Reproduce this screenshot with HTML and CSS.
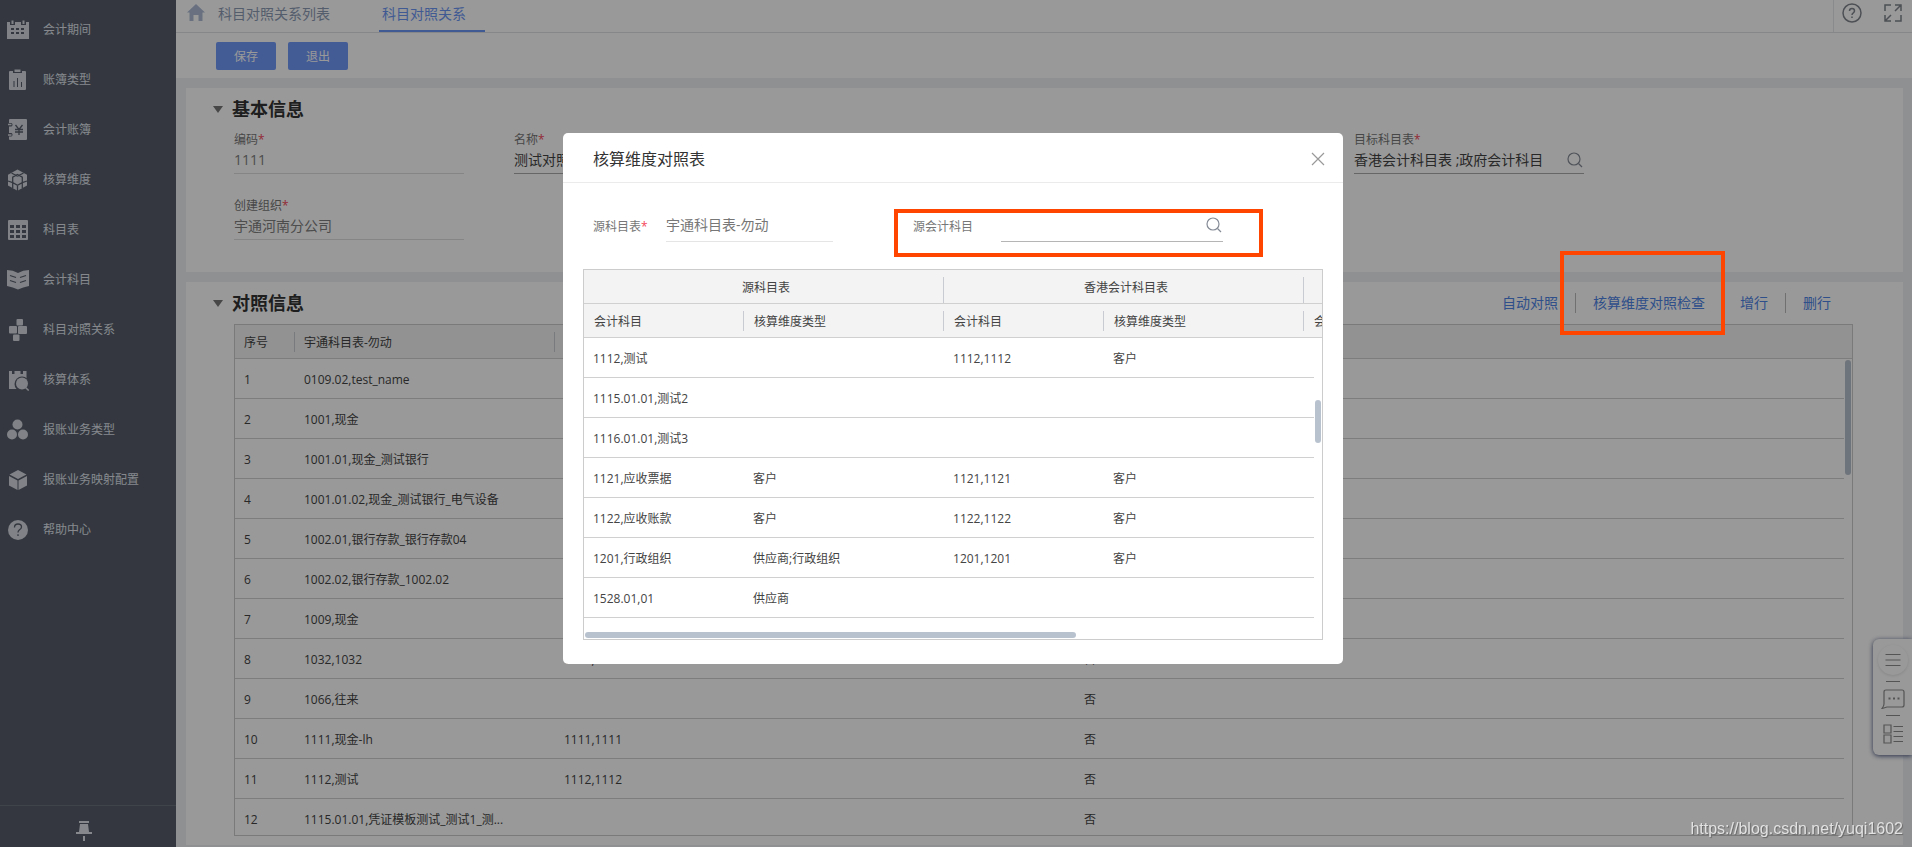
FILE: index.html
```html
<!DOCTYPE html>
<html lang="zh-CN">
<head>
<meta charset="utf-8">
<title>科目对照关系</title>
<link rel="stylesheet" href="styles.css">
</head>
<body>
<div class="app">
  <nav class="sidebar">
    <ul class="menu">
      <li><a class="menu-item" href="#"><svg class="menu-icon" viewBox="0 0 22 22"><path fill-rule="evenodd" d="M0 3h3v3h5V3h6v3h5V3h3v17H0zM4 9v2h3V9zm5 0v2h3V9zm5 0v2h3V9zM4 13v2h3v-2zm5 0v2h3v-2zm5 0v2h3v-2z"/><path d="M4.500 1.500h2v3.500h-2zM15.500 1.500h2v3.500h-2z"/></svg>会计期间</a></li>
      <li><a class="menu-item" href="#"><svg class="menu-icon" viewBox="0 0 22 22"><path fill-rule="evenodd" d="M3 2h3v2h9V2h3a1 1 0 0 1 1 1v17a1 1 0 0 1-1 1H3a1 1 0 0 1-1-1V3a1 1 0 0 1 1-1zm3.500 10v6h1v-6zm3.500-3v9h1V9zm4 4v5h1v-5z"/><path d="M7.500 0.500h6V3h-6z"/></svg>账簿类型</a></li>
      <li><a class="menu-item" href="#"><svg class="menu-icon" viewBox="0 0 22 22"><path d="M3 0h16q1 0 1 1v19q0 1-1 1H3q-1 0-1-1v-2.500h2.500a2 2 0 0 0 0-3.500H2V7.500h2.500a2 2 0 0 0 0-3.500H2V1q0-1 1-1z"/><path class="cut" d="M8.500 6l3.500 4.500L15.500 6M8 10.500h8M8 13h8M12 10.500V16"/><path class="line" d="M1 5.500h3.500M1 16h3.500"/></svg>会计账簿</a></li>
      <li><a class="menu-item" href="#"><svg class="menu-icon" viewBox="0 0 22 22"><path d="M10.500 0.500l9.500 5.300v10.600l-9.500 5.300-9.500-5.300V5.800z"/><path class="cut" d="M10.500 5.500l4.800 2.700v5.300l-4.800 2.700-4.800-2.700V8.200zM1 12l4.700 1.700M20 12l-4.700 1.700M10.500 16.200V22M4.500 4l6 3.200M16.500 4l-6 3.200M5.700 13.700V19M15.300 13.700V19"/></svg>核算维度</a></li>
      <li><a class="menu-item" href="#"><svg class="menu-icon" viewBox="0 0 22 22"><path fill-rule="evenodd" d="M2 1h18q1 0 1 1v18q0 1-1 1H2q-1 0-1-1V2q0-1 1-1zm1 5v3h4V6zm6 0v3h4V6zm6 0v3h4V6zM3 11v3h4v-3zm6 0v3h4v-3zm6 0v3h4v-3zM3 16v3h4v-3zm6 0v3h4v-3zm6 0v3h4v-3z"/></svg>科目表</a></li>
      <li><a class="menu-item" href="#"><svg class="menu-icon" viewBox="0 0 22 22"><path d="M0 1q6 0 11 3 5-3 11-3v16q-6 1-11 3.500Q6 18 0 17z"/><path class="cut" d="M3 6.500l6 2M19 6.500l-6 2M3 11.500l6 2M19 11.500l-6 2"/></svg>会计科目</a></li>
      <li><a class="menu-item" href="#"><svg class="menu-icon" viewBox="0 0 22 22"><rect x="9.500" y="0" width="6.500" height="6.500" rx="1"/><rect x="2" y="7" width="8" height="7.500" rx="1"/><rect x="11" y="7" width="9" height="8" rx="1"/><rect x="6" y="15.500" width="6.500" height="6.500" rx="1"/></svg>科目对照关系</a></li>
      <li><a class="menu-item" href="#"><svg class="menu-icon" viewBox="0 0 22 22"><path d="M2 2h3v3h2.500V2h6v3H16V2h3.500v18H2z"/><circle class="gap" cx="15" cy="15" r="7.500"/><path class="gap" d="M15 15h7v6.500h-7z"/><circle cx="15" cy="14.500" r="6"/><path class="line" d="M18.500 18.500l3.200 3"/></svg>核算体系</a></li>
      <li><a class="menu-item" href="#"><svg class="menu-icon" viewBox="0 0 22 22"><circle cx="10.500" cy="5.500" r="5"/><circle cx="5" cy="15.500" r="5"/><circle cx="16" cy="15.500" r="5"/></svg>报账业务类型</a></li>
      <li><a class="menu-item" href="#"><svg class="menu-icon" viewBox="0 0 22 22"><path d="M11 1l8.500 4.500L11 10 2.500 5.500zM2 7l8.500 4.500V21L2 16.500zM20 7l-8.500 4.500V21l8.500-4.500z"/></svg>报账业务映射配置</a></li>
      <li><a class="menu-item" href="#"><svg class="menu-icon" viewBox="0 0 22 22"><circle cx="11" cy="11" r="10"/><path class="cut" d="M7.500 8.500q0-3.500 3.500-3.500t3.500 3q0 1.500-2 2.800Q11 12 11 13.500M11 15.300v1.800"/></svg>帮助中心</a></li>
    </ul>
    <button class="pin" type="button" aria-label="固定菜单"><svg class="pin-icon" viewBox="0 0 18 20"><path d="M4 0h10v2H4zM5 3h8l1 8h3v2H1v-2h3zM8 15h2v5H8z"/></svg></button>
  </nav>

  <div class="main">
    <header class="topbar">
      <a class="home" href="#" aria-label="首页"><svg class="home-icon" viewBox="0 0 18 18"><path d="M9 0l9 8.500h-2.500V17h-4v-6h-5v6h-4V8.500H0z"/></svg></a>
      <a class="tab" href="#">科目对照关系列表</a>
      <a class="tab tab-active" href="#">科目对照关系</a>
      <div class="top-tools">
        <button class="tool" type="button" aria-label="帮助"><svg class="tool-icon" viewBox="0 0 20 20"><circle cx="10" cy="10" r="9"/><path d="M7.500 8q0-2.500 2.500-2.500T12.500 8q0 1-1.200 1.800Q10 10.600 10 12M10 13.500V15"/></svg></button>
        <button class="tool" type="button" aria-label="全屏"><svg class="tool-icon" viewBox="0 0 20 20"><path d="M2 8V2h6M12 2h6v6M12 8l6-6M18 12v6h-6M8 18H2v-6M8 12l-6 6"/></svg></button>
      </div>
    </header>
    <div class="actions">
      <button class="btn" type="button">保存</button>
      <button class="btn" type="button">退出</button>
    </div>

    <section class="card card-basic">
      <div class="card-head"><span class="arrow"></span><h2 class="card-title">基本信息</h2></div>
      <div class="fields">
        <div class="field"><label class="label" for="code">编码<i class="req">*</i></label><div class="control"><input class="input" id="code" value="1111" readonly></div></div>
        <div class="field"><label class="label" for="name">名称<i class="req">*</i></label><div class="control control-edit"><input class="input" id="name" value="测试对照关系"></div></div>
        <div class="field field-target"><label class="label" for="target">目标科目表<i class="req">*</i></label><div class="control control-edit"><input class="input" id="target" value="香港会计科目表 ;政府会计科目"><svg class="search-icon" viewBox="0 0 16 16"><circle cx="7" cy="7" r="6"/><path d="M11.500 11.500L15 15"/></svg></div></div>
        <div class="field"><label class="label" for="org">创建组织<i class="req">*</i></label><div class="control"><input class="input" id="org" value="宇通河南分公司" readonly></div></div>
      </div>
    </section>

    <section class="card card-map">
      <div class="card-head">
        <span class="arrow"></span><h2 class="card-title">对照信息</h2>
        <div class="links">
          <button class="link" type="button">自动对照</button>
          <button class="link" type="button">核算维度对照检查</button>
          <button class="link" type="button">增行</button>
          <button class="link" type="button">删行</button>
        </div>
      </div>
      <div class="grid-box">
        <table class="grid">
          <colgroup><col class="c-no"><col class="c-wide"><col class="c-wide"><col class="c-wide"><col></colgroup>
          <thead><tr><th>序号</th><th>宇通科目表-勿动</th><th></th><th></th><th class="last"></th></tr></thead>
          <tbody>
            <tr><td>1</td><td>0109.02,test_name</td><td></td><td></td><td></td></tr>
            <tr><td>2</td><td>1001,现金</td><td></td><td></td><td></td></tr>
            <tr><td>3</td><td>1001.01,现金_测试银行</td><td></td><td></td><td></td></tr>
            <tr><td>4</td><td>1001.01.02,现金_测试银行_电气设备</td><td></td><td></td><td></td></tr>
            <tr><td>5</td><td>1002.01,银行存款_银行存款04</td><td></td><td></td><td></td></tr>
            <tr><td>6</td><td>1002.02,银行存款_1002.02</td><td></td><td></td><td></td></tr>
            <tr><td>7</td><td>1009,现金</td><td></td><td></td><td></td></tr>
            <tr><td>8</td><td>1032,1032</td><td>1032,1032</td><td></td><td>否</td></tr>
            <tr><td>9</td><td>1066,往来</td><td></td><td></td><td>否</td></tr>
            <tr><td>10</td><td>1111,现金-lh</td><td>1111,1111</td><td></td><td>否</td></tr>
            <tr><td>11</td><td>1112,测试</td><td>1112,1112</td><td></td><td>否</td></tr>
            <tr><td>12</td><td>1115.01.01,凭证模板测试_测试1_测...</td><td></td><td></td><td>否</td></tr>
          </tbody>
        </table>
        <div class="track track-page"><div class="thumb"></div></div>
      </div>
    </section>
  </div>
</div>

<aside class="dock">
  <svg class="dock-icon dock-round" viewBox="0 0 30 30"><path d="M7.500 9.500h15M7.500 15h15M7.500 20.500h15"/></svg>
  <span class="dash"></span>
  <svg class="dock-icon dock-chat" viewBox="0 0 24 20"><path d="M5 1h16q2 0 2 2v13q0 2-2 2H6l-5 1.500Q3 17 3 15V3q0-2 2-2z"/><path class="dots" d="M7.500 9.500h2M12 9.500h2M16.500 9.500h2"/></svg>
  <span class="dash"></span>
  <svg class="dock-icon dock-list" viewBox="0 0 20 20"><path d="M1 1h7v8H1zM1 11h7v8H1zM10.500 2.500H20M10.500 7.500H20M10.500 12.500H20M10.500 17.500H20"/></svg>
</aside>

<div class="overlay">
  <div class="modal" role="dialog" aria-labelledby="modal-title">
    <div class="modal-head">
      <h3 class="modal-title" id="modal-title">核算维度对照表</h3>
      <button class="close" type="button" aria-label="关闭"><svg class="close-icon" viewBox="0 0 14 14"><path d="M1 1l12 12M13 1L1 13"/></svg></button>
    </div>
    <div class="modal-form">
      <label class="label label-src" for="src">源科目表<i class="req">*</i></label>
      <div class="line-control line-src"><input class="input" id="src" value="宇通科目表-勿动" readonly></div>
      <label class="label label-acc" for="acc">源会计科目</label>
      <div class="line-control line-acc"><input class="input" id="acc"><svg class="search-icon" viewBox="0 0 16 16"><circle cx="7" cy="7" r="6"/><path d="M11.500 11.500L15 15"/></svg></div>
    </div>
    <div class="grid-box modal-grid">
      <table class="grid grid-dim">
        <colgroup><col class="d-a"><col class="d-b"><col class="d-a"><col class="d-b"><col class="d-a"><col class="d-b"></colgroup>
        <thead>
          <tr><th class="group" colspan="2">源科目表</th><th class="group" colspan="2">香港会计科目表</th><th class="group" colspan="2"></th></tr>
          <tr><th>会计科目</th><th>核算维度类型</th><th>会计科目</th><th>核算维度类型</th><th>会计科目</th><th></th></tr>
        </thead>
        <tbody>
          <tr><td>1112,测试</td><td></td><td>1112,1112</td><td>客户</td><td></td><td></td></tr>
          <tr><td>1115.01.01,测试2</td><td></td><td></td><td></td><td></td><td></td></tr>
          <tr><td>1116.01.01,测试3</td><td></td><td></td><td></td><td></td><td></td></tr>
          <tr><td>1121,应收票据</td><td>客户</td><td>1121,1121</td><td>客户</td><td></td><td></td></tr>
          <tr><td>1122,应收账款</td><td>客户</td><td>1122,1122</td><td>客户</td><td></td><td></td></tr>
          <tr><td>1201,行政组织</td><td>供应商;行政组织</td><td>1201,1201</td><td>客户</td><td></td><td></td></tr>
          <tr><td>1528.01,01</td><td>供应商</td><td></td><td></td><td></td><td></td></tr>
        </tbody>
      </table>
      <div class="track track-modal"><div class="thumb"></div></div>
      <div class="hbar"></div>
    </div>
  </div>
</div>

<div class="mark mark-search"></div>
<div class="mark mark-check"></div>
<p class="watermark">https://blog.csdn.net/yuqi1602</p>
</body>
</html>
```
FILE: styles.css
```css
* { box-sizing: border-box; }

body {
  margin: 0;
  overflow: hidden;
  font: 12px/20px "Open Sans", "Noto Sans CJK SC", sans-serif;
  color: #444;
}

button, input { font: inherit; color: inherit; }
button { border: 0; padding: 0; background: none; }
h2, h3, p, ul { margin: 0; padding: 0; font-weight: normal; }
a { color: inherit; text-decoration: none; }
svg { display: block; flex: none; }

.app { display: flex; height: 100vh; }

/* sidebar */
.sidebar {
  display: flex;
  flex-direction: column;
  flex: 0 0 176px;
  background: #585d69;
  color: #dfe3ec;
}
.menu { flex: 1; padding-top: 4px; list-style: none; }
.menu-item { display: flex; align-items: center; gap: 14px; height: 50px; padding: 1px 0 0 7px; }
.menu-icon { width: 22px; height: 22px; fill: #d5d9e2; }
.menu-icon .cut { fill: none; stroke: #585d69; stroke-width: 1.3; }
.menu-icon .line { fill: none; stroke: #d5d9e2; stroke-width: 1.5; }
.menu-icon .gap { fill: #585d69; }
.pin {
  display: flex;
  justify-content: center;
  height: 42px;
  padding: 15px 8px 0 0;
  border-top: 1px solid #6a707c;
}
.pin-icon { width: 18px; height: 20px; fill: #dfe3ec; }

/* main column */
.main { display: flex; flex: 1; flex-direction: column; min-width: 0; padding-bottom: 2px; background: #eef0f4; }

.topbar { display: flex; height: 33px; background: #fff; border-bottom: 1px solid #e0e2e5; font-size: 14px; }
.home { padding: 4px 10px 0 11px; }
.home-icon { width: 18px; height: 18px; fill: #b0bdd6; }
.tab { height: 32px; padding: 4px 3px 0; color: #8c9bb5; }
.tab-active {
  width: 106px;
  margin-left: 46px;
  border-bottom: 2px solid #6c96f5;
  color: #6c96f5;
}
.top-tools { display: flex; gap: 21px; margin-left: auto; padding: 3px 9px 0 8px; border-left: 1px solid #e5e7ea; }
.tool { height: 20px; }
.tool-icon { width: 20px; height: 20px; fill: none; stroke: #80858d; stroke-width: 1.5; }

.actions { display: flex; gap: 12px; height: 45px; padding: 9px 40px; background: #fff; }
.btn { width: 60px; height: 28px; padding-top: 2px; border-radius: 2px; background: #7199fa; color: #fff; }

.card { margin: 10px 9px 0 10px; background: #fff; }
.card-basic { height: 184px; }
.card-map { display: flex; flex: 1; flex-direction: column; min-height: 0; }
.card-head { display: flex; align-items: center; height: 42px; padding: 0 72px 0 27px; }
.arrow { margin-right: 9px; border: 5px solid transparent; border-top: 7px solid #777; border-bottom: 0; }
.card-title { font-size: 18px; font-weight: bold; color: #333; }

.fields {
  display: grid;
  grid-template-columns: repeat(5, 230px);
  gap: 22px 50px;
  padding-left: 48px;
}
.field-target { grid-column: 5; }
.label { display: block; color: #777; }
.req { color: #f4485a; font-style: normal; }
.control { display: flex; align-items: center; height: 24px; padding-bottom: 3px; border-bottom: 1px solid #dedede; color: #808080; font-size: 14px; }
.control-edit { border-color: #aaa; color: #444; }
.input { flex: 1; min-width: 0; height: 20px; padding: 0; border: 0; outline: 0; background: none; }
.search-icon { width: 16px; height: 16px; margin-right: 1px; fill: none; stroke: #858b96; stroke-width: 1.2; }

.links { display: flex; margin-left: auto; color: #4e84e6; font-size: 14px; }
.link + .link { margin-left: 17px; padding-left: 17px; border-left: 1px solid #bbb; }

/* tables */
.grid-box { position: relative; overflow: hidden; border: 1px solid #ccc; background: #fff; }
.card-map .grid-box { flex: 1; margin: 0 50px 9px 48px; }
.grid { width: 100%; table-layout: fixed; border-spacing: 0; }
.grid th, .grid td {
  height: 40px;
  padding: 2px 10px 0 9px;
  border-bottom: 1px solid #d0d0d0;
  text-align: left;
  font-weight: normal;
  white-space: nowrap;
}
.grid th {
  height: 34px;
  background: linear-gradient(#c8ccd2, #c8ccd2) right center / 1px 20px no-repeat #f3f3f3;
}
.grid th.last { background: #f3f3f3; }
.grid th.group { padding: 2px 4px 0 8px; background-size: 1px 26px; background-position: right bottom; text-align: center; }
.c-no { width: 60px; }
.c-wide { width: 260px; }
.grid-dim th { padding-left: 10px; }
.track { position: absolute; right: 0; bottom: 0; width: 8px; background: #fff; }
.thumb { width: 6px; margin-left: 1px; border-radius: 3px; background: #b8c2cf; }
.track-page { top: 34px; padding-top: 1px; }
.track-page .thumb { height: 115px; }
.track-modal { top: 68px; padding-top: 62px; }
.track-modal .thumb { height: 43px; }

/* floating dock */
.dock {
  position: fixed;
  right: 0;
  top: 639px;
  display: flex;
  flex-direction: column;
  align-items: center;
  width: 39px;
  height: 116px;
  padding-top: 6px;
  border-radius: 6px 0 0 6px;
  background: #fff;
  box-shadow: 0 1px 5px #46527a;
}
.dock-icon { fill: none; stroke: #8d8d8d; stroke-width: 1.2; }
.dock-round { width: 30px; height: 30px; border-radius: 50%; box-shadow: 0 1px 3px #e2e2e6; }
.dash { width: 14px; height: 1px; margin: 6px 0 7px; background: #8d8d8d; }
.dock-chat { width: 24px; height: 20px; }
.dots { stroke-width: 2; }
.dock-list { width: 20px; height: 20px; margin-top: 1px; }

/* dialog */
.overlay {
  position: fixed;
  inset: 0;
  display: flex;
  align-items: flex-start;
  justify-content: center;
  padding: 133px 6px 0 0;
  background: rgba(0, 0, 0, 0.4);
}
.modal { width: 780px; border-radius: 5px; background: #fff; }
.modal-head {
  display: flex;
  align-items: center;
  justify-content: space-between;
  height: 50px;
  padding: 2px 18px 0 30px;
  border-bottom: 1px solid #ebebeb;
}
.modal-title { font-size: 16px; color: #333; }
.close-icon { width: 14px; height: 14px; fill: none; stroke: #999; stroke-width: 1.2; }
.modal-form { display: flex; align-items: center; padding: 27px 20px 0 30px; }
.modal-form .label { padding-top: 2px; }
.label-src { width: 73px; }
.line-control { display: flex; height: 32px; align-items: center; padding-bottom: 1px; border-bottom: 1px solid #e5e5e5; color: #777; font-size: 14px; }
.line-src { width: 167px; }
.label-acc { width: 88px; margin-left: 80px; }
.line-acc { width: 222px; border-color: #b5b5b5; }
.modal-grid { height: 371px; margin: 27px 20px 24px; }
.grid-dim { width: 1080px; }
.d-a { width: 160px; }
.d-b { width: 200px; }
.hbar { position: absolute; left: 1px; bottom: 1px; width: 491px; height: 6px; border-radius: 3px; background: #b8c2cf; }

/* annotations */
.mark { position: fixed; border: 4px solid #ff4500; }
.mark-search { left: 894px; top: 209px; width: 369px; height: 48px; }
.mark-check { left: 1560px; top: 251px; width: 165px; height: 84px; }
.watermark {
  position: fixed;
  right: 9px;
  bottom: 8px;
  font: 16px/20px "Liberation Sans", Arial, sans-serif;
  color: #e2e2e2;
  text-shadow: 1px 1px 1px #666;
}
```
